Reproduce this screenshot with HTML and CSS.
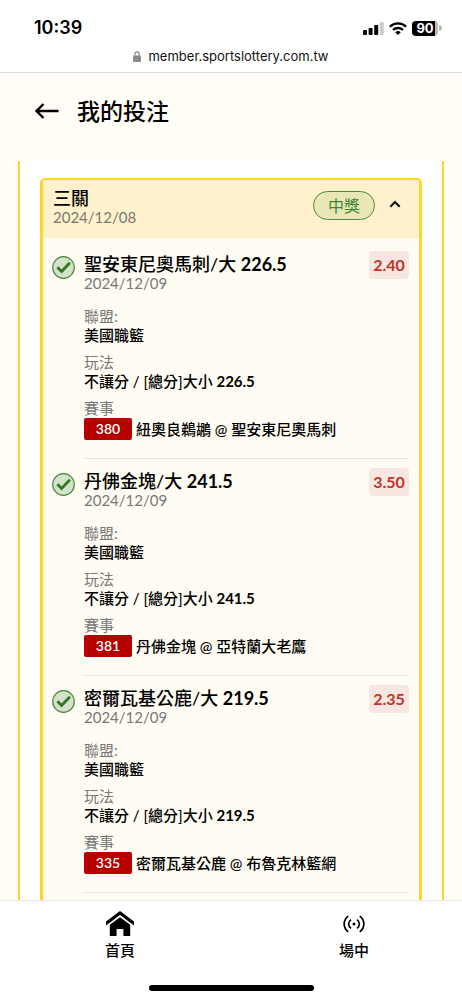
FILE: index.html
```html
<!DOCTYPE html>
<html lang="zh-Hant">
  <head>
    <meta charset="UTF-8" />
    <meta name="viewport" content="width=device-width, initial-scale=1.0" />
    <title>我的投注</title>
    <link rel="stylesheet" href="styles.css" />
  </head>
  <body>
    <div class="browser-bar">
      <div class="status">
        <span class="time">10:39</span>
        <div class="status-icons">
          <svg width="21" height="13" viewBox="0 0 21 13">
            <rect x="0" y="8" width="4" height="5" rx="1" />
            <rect x="5.6" y="6" width="4" height="7" rx="1" />
            <rect x="11.2" y="3" width="4" height="10" rx="1" />
            <rect x="16.8" y="0" width="4" height="13" rx="1" fill="#ccc" />
          </svg>
          <svg width="18" height="13" viewBox="0 0 18 13" fill="none" stroke="#000" stroke-width="2.3">
            <path d="M.9 4.7a11.6 11.6 0 0 1 16.2 0" />
            <path d="M4 8a7.2 7.2 0 0 1 10 0" />
            <path d="M9 13 6.2 10.3a4 4 0 0 1 5.6 0z" fill="#000" stroke="none" />
          </svg>
          <div class="battery">
            <span class="battery-level">90</span>
            <svg width="3" height="6" viewBox="0 0 3 6"><path d="M0 0a3 3 0 0 1 0 6z" fill="#bbb" /></svg>
          </div>
        </div>
      </div>
      <div class="address">
        <svg width="8" height="11" viewBox="0 0 8 11">
          <rect y="4.6" width="8" height="6.4" rx="1.2" fill="#8a8a8e" />
          <path d="M1.9 5V3a2.1 2.1 0 0 1 4.2 0v2" fill="none" stroke="#8a8a8e" stroke-width="1.2" />
        </svg>
        <span>member.sportslottery.com.tw</span>
      </div>
    </div>

    <header class="page-header">
      <button class="back" type="button" aria-label="返回">
        <svg width="24" height="16" viewBox="0 0 24 16" fill="none" stroke="#000" stroke-width="2.4">
          <path d="M23.5 8H1.5M8.5 1 1.5 8l7 7" />
        </svg>
      </button>
      <h1>我的投注</h1>
    </header>

    <main class="panel">
      <section class="ticket">
        <div class="ticket-header">
          <div>
            <h2>三關</h2>
            <p class="date">2024/12/08</p>
          </div>
          <span class="result">中獎</span>
          <button class="toggle" type="button" aria-label="收合">
            <svg width="12" height="8" viewBox="0 0 12 8" fill="none" stroke="#111" stroke-width="2.2">
              <path d="M1.3 6.7 6 2l4.7 4.7" />
            </svg>
          </button>
        </div>

        <article class="leg">
          <svg class="check" width="23" height="23" viewBox="0 0 23 23">
            <circle cx="11.5" cy="11.5" r="10.8" fill="#d5e1ca" stroke="#488a3b" stroke-width="1.2" />
            <path d="m5.4 11.2 4.2 4.2 8.3-8.7" fill="none" stroke="#2f7a20" stroke-width="2.8" />
          </svg>
          <div class="leg-body">
            <div class="leg-head">
              <div class="leg-title">
                <h3>聖安東尼奧馬刺/大 <b>226.5</b></h3>
                <p class="date">2024/12/09</p>
              </div>
              <span class="odds">2.40</span>
            </div>
            <dl>
              <div><dt>聯盟:</dt><dd>美國職籃</dd></div>
              <div><dt>玩法</dt><dd>不讓分 / [總分]大小 <b>226.5</b></dd></div>
              <div><dt>賽事</dt><dd class="match"><span class="code">380</span>紐奧良鵜鶘 @ 聖安東尼奧馬刺</dd></div>
            </dl>
          </div>
        </article>

        <article class="leg">
          <svg class="check" width="23" height="23" viewBox="0 0 23 23">
            <circle cx="11.5" cy="11.5" r="10.8" fill="#d5e1ca" stroke="#488a3b" stroke-width="1.2" />
            <path d="m5.4 11.2 4.2 4.2 8.3-8.7" fill="none" stroke="#2f7a20" stroke-width="2.8" />
          </svg>
          <div class="leg-body">
            <div class="leg-head">
              <div class="leg-title">
                <h3>丹佛金塊/大 <b>241.5</b></h3>
                <p class="date">2024/12/09</p>
              </div>
              <span class="odds">3.50</span>
            </div>
            <dl>
              <div><dt>聯盟:</dt><dd>美國職籃</dd></div>
              <div><dt>玩法</dt><dd>不讓分 / [總分]大小 <b>241.5</b></dd></div>
              <div><dt>賽事</dt><dd class="match"><span class="code">381</span>丹佛金塊 @ 亞特蘭大老鷹</dd></div>
            </dl>
          </div>
        </article>

        <article class="leg">
          <svg class="check" width="23" height="23" viewBox="0 0 23 23">
            <circle cx="11.5" cy="11.5" r="10.8" fill="#d5e1ca" stroke="#488a3b" stroke-width="1.2" />
            <path d="m5.4 11.2 4.2 4.2 8.3-8.7" fill="none" stroke="#2f7a20" stroke-width="2.8" />
          </svg>
          <div class="leg-body">
            <div class="leg-head">
              <div class="leg-title">
                <h3>密爾瓦基公鹿/大 <b>219.5</b></h3>
                <p class="date">2024/12/09</p>
              </div>
              <span class="odds">2.35</span>
            </div>
            <dl>
              <div><dt>聯盟:</dt><dd>美國職籃</dd></div>
              <div><dt>玩法</dt><dd>不讓分 / [總分]大小 <b>219.5</b></dd></div>
              <div><dt>賽事</dt><dd class="match"><span class="code">335</span>密爾瓦基公鹿 @ 布魯克林籃網</dd></div>
            </dl>
          </div>
        </article>
      </section>
    </main>

    <footer class="bottom">
      <nav class="tabs">
        <a href="#">
          <svg width="28" height="25" viewBox="0 0 28 25">
            <path d="M14 0 0 10.4v4L14 4l14 10.4v-4z" />
            <path d="M14 6.2 3.8 13.8V25h6.8v-7h6.8v7h6.8V13.8z" />
          </svg>
          首頁
        </a>
        <a href="#">
          <svg width="22" height="25" viewBox="0 0 22 25" fill="none" stroke="#000" stroke-width="1.7">
            <path d="M5.2 5.2C-.2 9.5-.2 16.5 5.2 20.8M16.8 5.2c5.4 4.3 5.4 11.3 0 15.6M8 8.6c-3.2 2.4-3.2 6.4 0 8.8M14 8.6c3.2 2.4 3.2 6.4 0 8.8" />
            <circle cx="11" cy="13" r="1.5" fill="#000" stroke="none" />
          </svg>
          場中
        </a>
      </nav>
      <div class="home-indicator"></div>
    </footer>
  </body>
</html>
```
FILE: styles.css
```css
* {
  box-sizing: border-box;
}
body {
  display: flex;
  flex-direction: column;
  height: 100vh;
  margin: 0;
  font-family: Lato, "Noto Sans CJK TC", sans-serif;
  font-size: 16px;
  line-height: 18px;
  color: #000;
  background-color: #fffdf5;
}
h1,
h2,
h3,
p,
dl,
dd {
  margin: 0;
}
svg {
  display: block;
  flex: none;
}
button {
  padding: 0;
  border: none;
  background: none;
  cursor: pointer;
}

/* browser chrome */
.browser-bar {
  flex: none;
  padding-top: 18px;
  padding-bottom: 7px;
  font-family: Inter, sans-serif;
  background-color: #fff;
  border-bottom: 1px solid #d9d9de;
}
.status {
  display: flex;
  justify-content: space-between;
  align-items: center;
  height: 20px;
  padding: 0 20px 0 34px;
}
.time {
  font-size: 18px;
  font-weight: 600;
}
.status-icons,
.battery {
  display: flex;
  align-items: center;
}
.status-icons {
  gap: 5px;
}
.battery {
  gap: 1px;
}
.battery-level {
  width: 26px;
  border-radius: 4px;
  font-size: 13px;
  font-weight: 700;
  line-height: 15px;
  text-align: center;
  color: #fff;
  background: linear-gradient(to right, #000 90%, #bbb 90%);
}
.address {
  display: flex;
  justify-content: center;
  align-items: center;
  gap: 7px;
  margin-top: 9px;
  font-size: 13px;
  color: #111;
}

.page-header {
  display: flex;
  flex: none;
  align-items: center;
  gap: 18px;
  height: 88px;
  padding: 0 35px 13px;
}
h1 {
  font-size: 23px;
  font-weight: 500;
  line-height: 28px;
}

/* ticket list */
.panel {
  flex: 1;
  min-height: 0;
  margin: 0 18px;
  padding: 17px 20px 0;
  overflow-y: auto;
  scrollbar-width: none;
  background-color: #fff;
  border: solid #ffd528;
  border-width: 0 2px;
}
.ticket {
  padding-bottom: 40px;
  background-color: #fffdf3;
  border: solid #ffd528;
  border-width: 2px 3px;
  border-radius: 5px;
}
.ticket-header {
  display: flex;
  align-items: flex-start;
  height: 58px;
  margin-bottom: 4px;
  padding: 8px 18px 0 10px;
  background-color: #fff1cb;
}
h2,
h3 {
  font-size: 18px;
  font-weight: 500;
  line-height: 20px;
}
b {
  font-weight: 700;
}
.date {
  font-size: 15px;
}
.date,
dt {
  color: #777;
}
.result {
  margin-top: 3px;
  margin-left: auto;
  width: 62px;
  border: 1px solid #488a3b;
  border-radius: 15px;
  line-height: 27px;
  text-align: center;
  color: #3b8530;
  background-color: #e9e7b8;
}
.toggle {
  margin-top: 12px;
  margin-left: 14px;
}

.leg {
  display: flex;
  gap: 9px;
  padding: 0 10px 0 9px;
}
.check {
  margin-top: 14px;
}
.leg-body {
  flex: 1;
  padding: 9px 0 17px;
  border-bottom: 1px solid #e6e3dc;
}
.leg-head {
  display: flex;
  justify-content: space-between;
  align-items: flex-start;
}
.leg-title {
  padding-top: 3px;
}
.odds {
  width: 40px;
  border-radius: 4px;
  font-weight: 700;
  line-height: 28px;
  text-align: center;
  color: #c0322b;
  background-color: #f8e6e0;
}
dl {
  display: flex;
  flex-direction: column;
  gap: 8px;
  margin-top: 15px;
}
dt,
dd {
  font-size: 15px;
}
dd {
  font-weight: 500;
  line-height: 20px;
}
.match {
  display: flex;
  align-items: center;
  gap: 4px;
  height: 24px;
}
.code {
  width: 48px;
  border-radius: 2px;
  font-size: 14px;
  font-weight: 600;
  line-height: 22px;
  text-align: center;
  color: #fff;
  background-color: #b60000;
}

/* bottom navigation */
.bottom {
  flex: none;
  padding-bottom: 9px;
  background-color: #fff;
  border-top: 1px solid #e5e5e5;
}
.tabs {
  display: grid;
  grid-template-columns: 51% 51%;
  padding: 10px 0 25px 3px;
  overflow: hidden;
}
.tabs a {
  display: flex;
  flex-direction: column;
  align-items: center;
  gap: 4px;
  font-size: 15px;
  font-weight: 500;
  line-height: 20px;
  color: #000;
  text-decoration: none;
}
.home-indicator {
  width: 165px;
  height: 6px;
  margin: 0 auto;
  border-radius: 3px;
  background-color: #000;
}
```
